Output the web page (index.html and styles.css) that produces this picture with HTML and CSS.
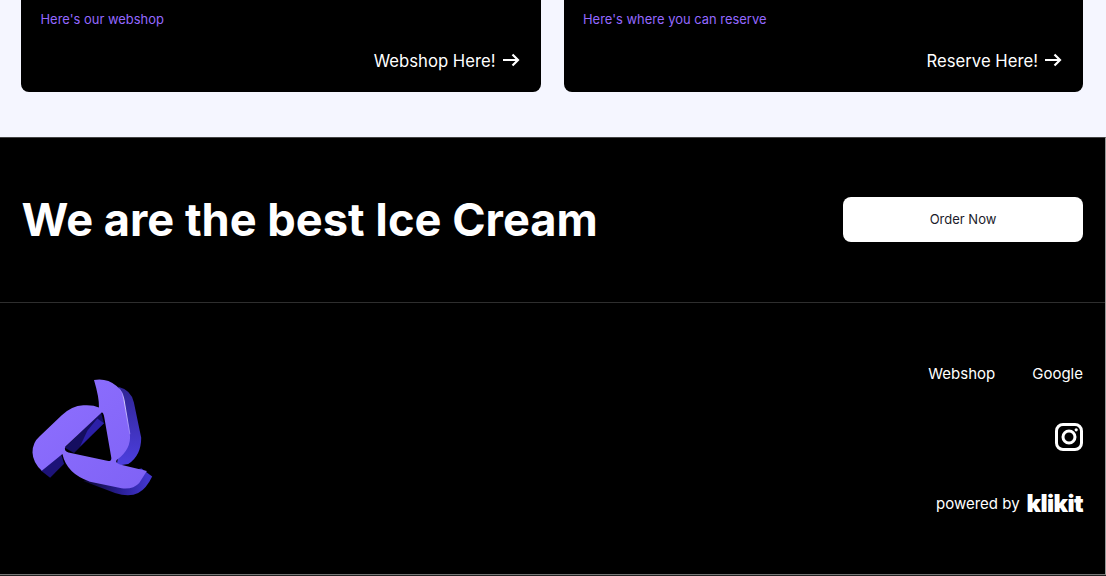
FILE: index.html
```html
<!DOCTYPE html>
<html lang="en">
<head>
<meta charset="utf-8">
<title>We are the best Ice Cream</title>
<link rel="stylesheet" href="styles.css">
</head>
<body>
<section class="cards">
  <a class="card">
    <p class="card-sub">Here's our webshop</p>
    <span class="card-link">Webshop Here!
      <svg class="arrow" viewBox="0 0 18 14"><path d="M1 7H16M10.500 1.500 16 7l-5.500 5.500"/></svg>
    </span>
  </a>
  <a class="card">
    <p class="card-sub">Here's where you can reserve</p>
    <span class="card-link">Reserve Here!
      <svg class="arrow" viewBox="0 0 18 14"><path d="M1 7H16M10.500 1.500 16 7l-5.500 5.500"/></svg>
    </span>
  </a>
</section>
<footer class="footer">
  <div class="cta">
    <h1 class="cta-title">We are the best Ice Cream</h1>
    <a class="cta-button">Order Now</a>
  </div>
  <div class="bottom">
    <svg class="logo" viewBox="90 50 375 370">
      <defs>
        <linearGradient id="side" x1="0" y1="0" x2="0" y2="1">
          <stop offset="0" stop-color="#2f2494"/>
          <stop offset="1" stop-color="#4d3fe0"/>
        </linearGradient>
        <linearGradient id="under" gradientUnits="userSpaceOnUse" x1="250" y1="370" x2="440" y2="380">
          <stop offset="0" stop-color="#0c0830"/>
          <stop offset="0.600" stop-color="#2a1f96"/>
          <stop offset="1" stop-color="#4135cc"/>
        </linearGradient>
        <linearGradient id="face" x1="0" y1="0" x2="1" y2="1">
          <stop offset="0" stop-color="#8f70ff"/>
          <stop offset="1" stop-color="#7f62f5"/>
        </linearGradient>
        <linearGradient id="shine" gradientUnits="userSpaceOnUse" x1="360" y1="90" x2="390" y2="235">
          <stop offset="0" stop-color="#8f70ff"/>
          <stop offset="0.250" stop-color="#efe9ff"/>
          <stop offset="1" stop-color="#9a80ff"/>
        </linearGradient>
      </defs>
      <path fill="url(#side)" d="M355 82Q395 92 402 130L424 236Q424 290 385 315L350 320 370 200Z"/>
      <path fill="url(#under)" d="M425 328 457 352Q440 388 415 402 388 416 345 402L250 366 300 350Z"/>
      <path fill="#1d1378" d="M122 334 150 356 192 314 182 282Z"/>
      <path fill="#150e60" d="M303 158 312 192 222 282 194 266Z"/>
      <path fill="#2c20a8" d="M292 178 312 192 240 262 262 215Z"/>
      <path fill="url(#face)" fill-rule="evenodd" d="M282 62Q320 55 350 80 368 95 372 120L390 225Q395 270 350 303 345 312 360 316L441 336 418 372Q400 392 365 388L270 368Q200 345 187 285L125 335Q98 310 97 280 97 250 118 232L185 168Q215 140 250 138 280 136 297 145 298 115 282 62ZM305 160 196 262Q190 275 205 280L325 306Q336 306 334 295L313 175Q310 158 305 160Z"/>
      <path fill="none" stroke="url(#shine)" stroke-width="2.500" d="M358 88Q369 100 372 120L390 225"/>
    </svg>
    <div class="side">
      <nav class="links"><a>Webshop</a><a>Google</a></nav>
      <svg class="insta" viewBox="0 0 28 28">
        <rect x="1.500" y="1.500" width="25" height="25" rx="6.500"/>
        <circle cx="14" cy="14" r="6"/>
        <circle class="dot" cx="21.200" cy="6.800" r="1.600"/>
      </svg>
      <div class="powered"><span>powered by</span><span class="klikit">klikit</span></div>
    </div>
  </div>
</footer>
</body>
</html>
```
FILE: styles.css
```css
* { box-sizing: border-box; }
html, body { margin: 0; height: 576px; overflow: hidden; }
body { background: #f5f6ff; font-family: Inter, "Liberation Sans", sans-serif; color: #fff; }

.cards { height: 137px; padding: 0 23px 45px 21px; display: flex; gap: 23px; }
.card { flex: 1; background: #000; border-radius: 0 0 8px 8px; padding: 12px 21px 19px 19.500px; display: flex; flex-direction: column; justify-content: space-between; }
.card-sub { margin: 0; font-size: 12.950px; line-height: 15px; color: #9468ff; }
.card-link { align-self: flex-end; display: flex; align-items: center; gap: 6px; font-size: 16.700px; line-height: 24px; padding-top: 1px; }
.arrow { width: 18px; height: 14px; margin-top: -3px; fill: none; stroke: #fff; stroke-width: 2.200; }

.footer { height: 438px; width: 1106px; background: #000; border-top: 1px solid #444; border-right: 1px solid #999; border-bottom: 1px solid #777; box-shadow: 0 1px 0 #222; }
.cta { height: 165px; padding: 0 22px 0 21.500px; display: flex; align-items: center; justify-content: space-between; border-bottom: 1px solid #2e2e2e; }
.cta-title { margin: 0; font-size: 45.200px; line-height: 58px; font-weight: 700; }
.cta-button { width: 240px; height: 45px; margin-bottom: 2px; background: #fff; color: #1b1b2a; border-radius: 8px; display: flex; align-items: center; justify-content: center; font-size: 13px; }

.bottom { display: flex; justify-content: space-between; padding: 61px 22px 0 30px; }
.logo { width: 125px; height: 123px; margin-top: 12px; }
.side { display: flex; flex-direction: column; align-items: flex-end; }
.links { display: flex; gap: 37px; font-size: 15px; line-height: 20px; }
.insta { width: 28px; height: 28px; margin-top: 39px; fill: none; stroke: #fff; stroke-width: 3; }
.insta .dot { fill: #fff; stroke: none; }
.powered { margin-top: 41px; display: flex; align-items: center; gap: 7px; font-size: 15px; line-height: 24px; }
.klikit { font-weight: 900; font-size: 24px; letter-spacing: -0.600px; line-height: 24px; }
```
